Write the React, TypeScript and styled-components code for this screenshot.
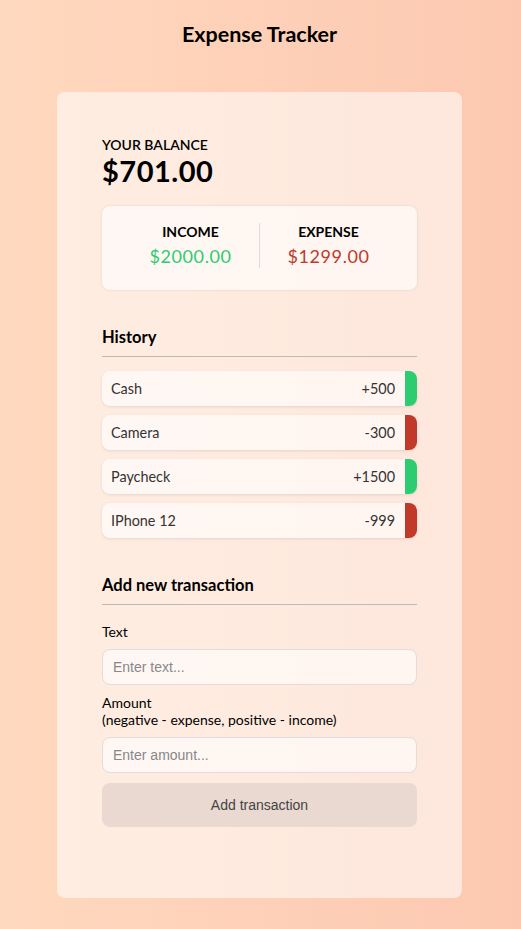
import React from 'react';
import styled, { createGlobalStyle } from 'styled-components';

const GlobalStyle = createGlobalStyle`
  * {
    box-sizing: border-box;
  }

  body {
    margin: 0;
    min-height: 100vh;
    font-family: Lato, 'Noto Sans', sans-serif;
    background: linear-gradient(90deg, #ffd9bf 0%, #fcc8b0 100%);
    color: #000;
  }
`;

const Page = styled.div`
  display: flex;
  flex-direction: column;
  align-items: center;
  padding: 20px 2px 32px 0;
`;

const Title = styled.h2`
  margin: 0;
  font-size: 21.5px;
  font-weight: 700;
  line-height: 28px;
`;

const Card = styled.div`
  width: 405px;
  margin-top: 44px;
  padding: 44px 45px 71px;
  background: rgba(255, 255, 255, 0.55);
  border-radius: 8px;
`;

const BalanceLabel = styled.h4`
  margin: 0;
  font-size: 14px;
  font-weight: 600;
  line-height: 18px;
  text-transform: uppercase;
`;

const BalanceValue = styled.h1`
  margin: 0;
  font-size: 29px;
  font-weight: 700;
  line-height: 34px;
  letter-spacing: 0.5px;
`;

const IncExp = styled.div`
  display: flex;
  margin-top: 18px;
  padding: 17px 20px 22px;
  background: rgba(255, 255, 255, 0.6);
  border-radius: 8px;
  box-shadow: 0 0 3px rgba(0, 0, 0, 0.1);
`;

const Column = styled.div<{ $divider?: boolean }>`
  flex: 1;
  text-align: center;
  ${(p) => (p.$divider ? 'border-right: 1px solid #ddd;' : '')}
`;

const ColumnTitle = styled.h4`
  margin: 0;
  font-size: 14px;
  font-weight: 700;
  line-height: 18px;
  text-transform: uppercase;
`;

const Money = styled.p<{ $plus?: boolean }>`
  margin: 3px 0 0;
  font-size: 18px;
  line-height: 24px;
  letter-spacing: 0.6px;
  color: ${(p) => (p.$plus ? '#2ecc71' : '#c0392b')};
`;

const SectionTitle = styled.h3`
  margin: 36px 0 14px;
  padding-bottom: 8px;
  border-bottom: 1px solid #bbb;
  font-size: 16.5px;
  font-weight: 700;
  line-height: 22px;
`;

const List = styled.ul`
  list-style: none;
  margin: 0;
  padding: 0;
  display: flex;
  flex-direction: column;
  gap: 9px;
`;

const Item = styled.li<{ $plus?: boolean }>`
  display: flex;
  justify-content: space-between;
  align-items: center;
  height: 35px;
  padding: 0 10px 0 9px;
  background: rgba(255, 255, 255, 0.6);
  border-radius: 8px;
  border-right: 12px solid ${(p) => (p.$plus ? '#2ecc71' : '#c0392b')};
  box-shadow: 0 1px 3px rgba(0, 0, 0, 0.1);
  font-size: 14.4px;
  color: #333;
`;

const Form = styled.form`
  display: flex;
  flex-direction: column;
`;

const FormTitle = styled(SectionTitle)`
  margin-top: 36px;
  margin-bottom: 18px;
`;

const Label = styled.label`
  display: block;
  font-size: 14px;
  line-height: 17px;
  margin-bottom: 9px;
`;

const Field = styled.div`
  margin-bottom: 9px;
`;

const Input = styled.input`
  display: block;
  width: 100%;
  height: 36px;
  padding: 0 10px;
  border: 1px solid #e4dcd8;
  border-radius: 8px;
  background: rgba(255, 255, 255, 0.6);
  font-family: 'Liberation Sans', Arial, sans-serif;
  font-size: 14px;
  color: #333;

  &::placeholder {
    color: #888;
  }
`;

const Button = styled.button`
  height: 44px;
  margin-top: 1px;
  border: none;
  border-radius: 8px;
  background: #e9d9d0;
  font-family: 'Liberation Sans', Arial, sans-serif;
  font-size: 14px;
  color: #444;
  cursor: pointer;
`;

const transactions = [
  { id: 1, text: 'Cash', amount: 500 },
  { id: 2, text: 'Camera', amount: -300 },
  { id: 3, text: 'Paycheck', amount: 1500 },
  { id: 4, text: 'IPhone 12', amount: -999 },
];

export default function App() {
  const amounts = transactions.map((t) => t.amount);
  const total = amounts.reduce((a, b) => a + b, 0).toFixed(2);
  const income = amounts.filter((a) => a > 0).reduce((a, b) => a + b, 0).toFixed(2);
  const expense = Math.abs(amounts.filter((a) => a < 0).reduce((a, b) => a + b, 0)).toFixed(2);

  return (
    <>
      <GlobalStyle />
      <Page>
        <Title>Expense Tracker</Title>
        <Card>
          <BalanceLabel>Your Balance</BalanceLabel>
          <BalanceValue>${total}</BalanceValue>

          <IncExp>
            <Column $divider>
              <ColumnTitle>Income</ColumnTitle>
              <Money $plus>${income}</Money>
            </Column>
            <Column>
              <ColumnTitle>Expense</ColumnTitle>
              <Money>${expense}</Money>
            </Column>
          </IncExp>

          <SectionTitle>History</SectionTitle>
          <List>
            {transactions.map((t) => (
              <Item key={t.id} $plus={t.amount > 0}>
                {t.text}
                <span>{t.amount > 0 ? '+' : '-'}{Math.abs(t.amount)}</span>
              </Item>
            ))}
          </List>

          <FormTitle>Add new transaction</FormTitle>
          <Form onSubmit={(e) => e.preventDefault()}>
            <Field>
              <Label htmlFor="text">Text</Label>
              <Input id="text" type="text" placeholder="Enter text..." />
            </Field>
            <Field>
              <Label htmlFor="amount">
                Amount
                <br />
                (negative - expense, positive - income)
              </Label>
              <Input id="amount" type="number" placeholder="Enter amount..." />
            </Field>
            <Button type="submit">Add transaction</Button>
          </Form>
        </Card>
      </Page>
    </>
  );
}
